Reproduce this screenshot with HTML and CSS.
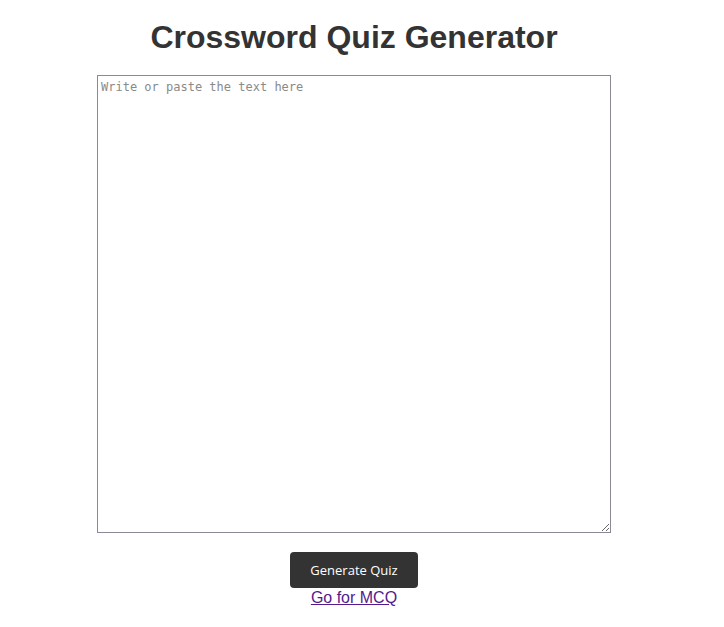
FILE: index.html
```html
<!DOCTYPE html>
<html>
<head>
<meta charset="utf-8">
<title>Crossword Quiz Generator</title>
<link rel="stylesheet" href="styles.css">
</head>
<body>
<main class="page">
  <h1 class="title">Crossword Quiz Generator</h1>
  <textarea class="input" placeholder="Write or paste the text here"></textarea>
  <div class="actions">
    <button class="btn">Generate Quiz</button>
    <a class="link" href="#">Go for MCQ</a>
  </div>
</main>
</body>
</html>
```
FILE: styles.css
```css
html, body {
  margin: 0;
  padding: 0;
  background: #fff;
}
.page {
  width: 708px;
  display: flex;
  flex-direction: column;
  align-items: center;
  font-family: "Liberation Sans", Arial, sans-serif;
}
.title {
  margin: 19px 0 0;
  font-size: 32px;
  line-height: 37px;
  font-weight: bold;
  color: #333;
}
.input {
  box-sizing: border-box;
  margin-top: 19px;
  width: 514px;
  height: 458px;
  border: 1px solid #8a8a96;
  padding: 3px 3px;
  font-family: "DejaVu Sans Mono", monospace;
  font-size: 12px;
  line-height: 16px;
  resize: both;
  outline: none;
}
.input::placeholder {
  color: #8a8a8a;
}
.actions {
  margin-top: 19px;
  display: flex;
  flex-direction: column;
  align-items: center;
}
.btn {
  width: 128px;
  height: 36px;
  background: #333;
  color: #fff;
  border: none;
  border-radius: 4px;
  font-family: "Open Sans", "Noto Sans", sans-serif;
  font-size: 13px;
}
.link {
  margin-top: 1px;
  font-size: 16px;
  line-height: 18px;
  color: #551a8b;
  text-decoration: underline;
}
```
